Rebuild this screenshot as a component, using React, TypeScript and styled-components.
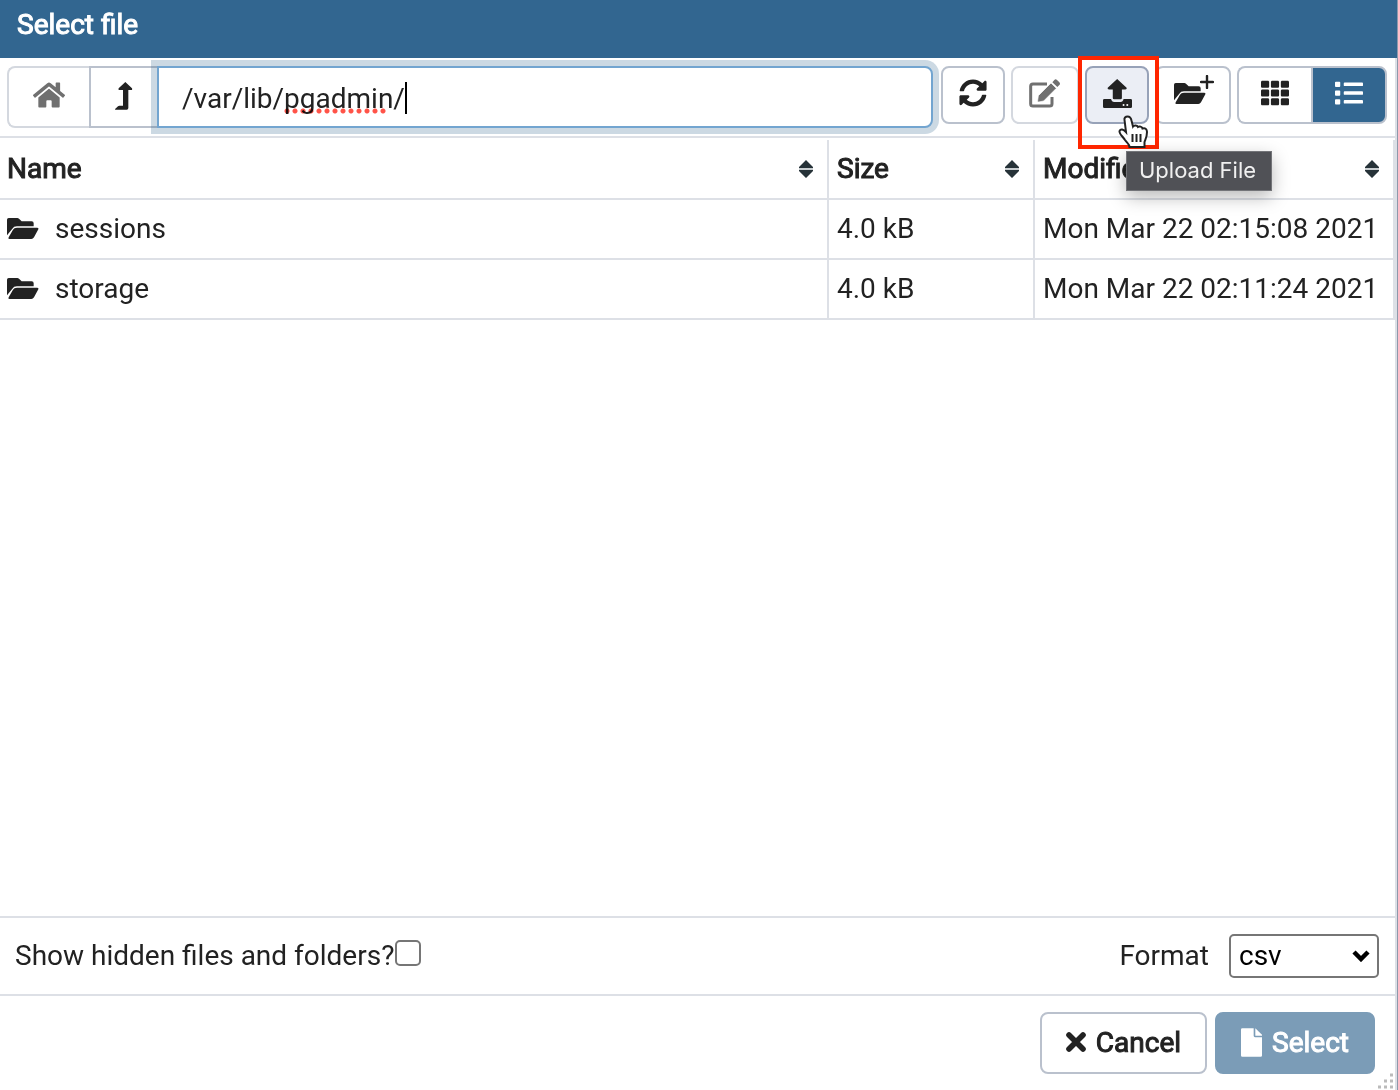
import React from "react";
import styled, { createGlobalStyle, css } from "styled-components";
import { FaHome, FaSyncAlt, FaTh, FaList } from "react-icons/fa";

const line = "#dde0e6";
const outline = "#bac1cd";
const brand = "#326690";
const ink = "#222222";

const GlobalStyle = createGlobalStyle`
  *, *::before, *::after { box-sizing: border-box; }
  body { margin: 0; background: #fff; }
  button, input, select { font: inherit; color: inherit; margin: 0; }
`;

const heavy = css`
  font-weight: 400;
  -webkit-text-stroke: 1px currentColor;
`;

const Frame = styled.div`
  border-right: 1px solid #8e99ab;
  background: #fff;
`;

const Dialog = styled.main`
  position: relative;
  display: flex;
  flex-direction: column;
  min-height: 100vh;
  border-right: 2px solid ${line};
  font: 400 28px/40px Roboto, "Liberation Sans", sans-serif;
  color: ${ink};
`;

const TitleBar = styled.h1`
  margin: 0 -2px 0 0;
  height: 58px;
  padding: 5px 17px;
  font-size: 28px;
  line-height: 40px;
  ${heavy}
  color: #fff;
  background: ${brand};
`;

const Toolbar = styled.div`
  display: flex;
  align-items: flex-start;
  gap: 6px;
  padding: 8px 8px 8px 7px;
  border-bottom: 2px solid ${line};
`;

const PathGroup = styled.div`
  display: flex;
  flex: 1;
  height: 62px;
  margin-right: 2px;
`;

const ToolButton = styled.button<{ $width?: number; $active?: boolean; $hot?: boolean }>`
  display: flex;
  align-items: center;
  justify-content: center;
  flex: none;
  width: ${(p) => p.$width ?? 64}px;
  height: 58px;
  padding: 0 0 4px;
  border: 2px solid ${outline};
  border-radius: 8px;
  background: ${(p) => (p.$active ? brand : p.$hot ? "#ebeef5" : "#fff")};
  color: ${(p) => (p.$active ? "#fff" : ink)};
  ${(p) => p.$hot && css`border-color: #97a2b8;`}
  &:disabled { border-color: #d4d8df; color: #707070; }
`;

const HomeButton = styled(ToolButton)`
  height: 62px;
  border-radius: 8px 0 0 8px;
  border-right: 0;
`;

const UpButton = styled(ToolButton)`
  height: 62px;
  padding-bottom: 2px;
  border-radius: 0;
  border-right: 0;
`;

const PathBox = styled.div`
  position: relative;
  display: flex;
  flex: 1;
  min-width: 0;
`;

const PathInput = styled.input`
  flex: 1;
  min-width: 0;
  height: 62px;
  padding: 2px 23px 0;
  border: 2px solid #73a5d0;
  border-radius: 0 8px 8px 0;
  outline: none;
  box-shadow: 0 0 0 6px rgba(50, 102, 144, 0.25);
  background: #fff;
`;

const SpellingDots = styled.span`
  position: absolute;
  left: 127px;
  top: 42px;
  width: 102px;
  height: 6px;
  background: radial-gradient(circle at 3px 3px, #ff5348 2px, rgba(255, 83, 72, 0) 3px) 0 0 / 8px 6px repeat-x;
  mix-blend-mode: multiply;
  pointer-events: none;
`;

const Caret = styled.span`
  position: absolute;
  left: 248px;
  top: 16px;
  width: 2px;
  height: 32px;
  background: #000;
  pointer-events: none;
`;

const ButtonPair = styled.div`
  display: flex;
  > :first-child { border-radius: 8px 0 0 8px; border-right: 0; }
  > :last-child { border-radius: 0 8px 8px 0; }
`;

const UploadSlot = styled.div`
  position: relative;
`;

const Highlight = styled.span`
  position: absolute;
  inset: -10px -10px -25px -7px;
  border: 4px solid #ff2600;
  pointer-events: none;
`;

const Tooltip = styled.span`
  position: absolute;
  z-index: 2;
  left: 41px;
  top: 85px;
  padding: 0 15px 2px 12px;
  border: 1px solid #737478;
  background: #505156;
  color: #f0f0f0;
  font: 400 22px/36px Inter, "Liberation Sans", sans-serif;
  white-space: nowrap;
  box-shadow: 0 6px 18px rgba(0, 0, 0, 0.28);
`;

const Pointer = styled.svg`
  position: absolute;
  z-index: 3;
  left: 33px;
  top: 49px;
`;

const FolderPlus = styled.span`
  position: relative;
  display: flex;
  padding-right: 6px;
  > :last-child { position: absolute; right: -2px; top: -8px; }
`;

const Listing = styled.section`
  flex: 1;
  padding-top: 2px;
`;

const Table = styled.table`
  width: 100%;
  border-collapse: separate;
  border-spacing: 0;
  border-right: 2px solid ${line};
  table-layout: fixed;
`;

const Cell = styled.td`
  height: 60px;
  padding: 0 8px;
  border-bottom: 2px solid ${line};
  white-space: nowrap;
  &:first-child { padding-left: 7px; }
  & + & { border-left: 2px solid ${line}; }
`;

const HeadCell = styled.th`
  height: 60px;
  padding: 0 13px 0 8px;
  text-align: left;
  ${heavy}
  border-bottom: 2px solid ${line};
  &:first-child { padding-left: 7px; }
  & + & { border-left: 2px solid ${line}; }
`;

const HeadLabel = styled.span`
  display: flex;
  align-items: center;
  justify-content: space-between;
`;

const FileName = styled.span`
  display: flex;
  align-items: center;
  gap: 16px;
  svg { margin-bottom: 2px; }
`;

const Options = styled.div`
  display: flex;
  align-items: center;
  justify-content: space-between;
  height: 80px;
  padding: 0 16px 0 15px;
  border-top: 2px solid ${line};
  border-bottom: 2px solid ${line};
`;

const Field = styled.label<{ $gap?: number }>`
  display: flex;
  align-items: center;
  gap: ${(p) => p.$gap ?? 1}px;
`;

const CheckBox = styled.input`
  appearance: none;
  width: 26px;
  height: 26px;
  margin-bottom: 6px;
  border: 2px solid #767676;
  border-radius: 5px;
  background: #fff;
`;

const SelectWrap = styled.span`
  position: relative;
  display: flex;
`;

const FormatSelect = styled.select`
  appearance: none;
  width: 150px;
  height: 44px;
  padding: 0 8px;
  border: 2px solid #767676;
  border-radius: 5px;
  color: #000;
  background: #fff;
`;

const Chevron = styled.svg`
  position: absolute;
  right: 9px;
  top: 16px;
  pointer-events: none;
`;

const Actions = styled.footer`
  display: flex;
  justify-content: flex-end;
  gap: 8px;
  padding: 16px 20px;
`;

const ActionButton = styled.button<{ $primary?: boolean }>`
  display: flex;
  align-items: center;
  gap: 10px;
  height: 62px;
  padding: 0 24px;
  border: 2px solid ${(p) => (p.$primary ? "#7b9cb7" : outline)};
  border-radius: 8px;
  ${heavy}
  color: ${(p) => (p.$primary ? "#fff" : ink)};
  background: ${(p) => (p.$primary ? "#7b9cb7" : "#fff")};
  svg { margin-bottom: 2px; }
`;

const Grip = styled.svg`
  position: absolute;
  right: 0;
  bottom: 0;
`;

const SortIcon = () => (
  <svg width="16" height="20" viewBox="0 0 16 20" aria-hidden="true">
    <path d="M8 1 15 8V9H1V8Z M8 19 1 12V11H15V12Z" fill="#263238" />
    <path d="M1 10H15" stroke="#c8cdd0" strokeWidth="2" />
  </svg>
);

const FolderIcon = () => (
  <svg width="32" height="21" viewBox="0 0 96 63" fill="currentColor" aria-hidden="true">
    <path d="M0 52V5q0-5 5-5H31q3 0 5 2l8 8H74q6 0 6 6v9H30q-10 0-14 7Z" />
    <path d="M30 29H91q5 0 3 5L81 58q-3 5-8 5H7q-5 0-2-5L18 35q3-6 12-6Z" />
  </svg>
);

const PlusIcon = () => (
  <svg width="14" height="14" viewBox="0 0 14 14" aria-hidden="true">
    <path d="M7 1V13M1 7H13" stroke="currentColor" strokeWidth="2.4" strokeLinecap="round" />
  </svg>
);

const UpIcon = () => (
  <svg width="18" height="28" viewBox="0 0 54 84" fill="currentColor" aria-hidden="true">
    <path d="M31 0 51 19q2 5-3 5H40V78q0 5-5 5H1q-2-1 0-3L9 73q2-2 4-2H24V24H14q-5 0-3-5Z" />
  </svg>
);

const EditIcon = () => (
  <svg width="32" height="29" viewBox="0 0 96 87" aria-hidden="true">
    <path d="M54 15H12q-7 0-7 7V74q0 7 7 7H62q7 0 7-7V54" fill="none" stroke="currentColor" strokeWidth="9" />
    <path d="M28 50 66 12 82 28 44 66 29 69q-4 0-3-4Z" fill="currentColor" stroke="#fff" strokeWidth="2" />
    <path d="M70 10l6-7q4-4 8 0l7 7q4 4 0 8l-6 6Z" fill="currentColor" />
  </svg>
);

const UploadIcon = () => (
  <svg width="29" height="29" viewBox="0 0 86 86" fill="currentColor" aria-hidden="true">
    <path d="M42 0 70 26q2 5-4 5H56V56q0 4-4 4H33q-4 0-4-4V31H18q-6 0-4-5Z" />
    <path d="M4 59H24q2 9 9 9H52q7 0 9-9H82q4 0 4 4V82q0 4-4 4H4q-4 0-4-4V63q0-4 4-4Z" />
    <circle cx="61" cy="77" r="3" fill="#fff" />
    <circle cx="72" cy="77" r="3" fill="#fff" />
  </svg>
);

const CloseIcon = () => (
  <svg width="20" height="20" viewBox="0 0 20 20" aria-hidden="true">
    <path d="M3 3 17 17M17 3 3 17" stroke="currentColor" strokeWidth="5.600" strokeLinecap="round" />
  </svg>
);

const FileIcon = () => (
  <svg width="21" height="29" viewBox="0 0 63 86" fill="currentColor" aria-hidden="true">
    <path d="M4 0H38V23q0 4 4 4H63V82q0 4-4 4H4q-4 0-4-4V4q0-4 4-4Z" />
    <path d="M43 0 63 20V23H43Z" />
  </svg>
);

const columns = [
  { label: "Name", width: undefined },
  { label: "Size", width: 206 },
  { label: "Modified", width: 360 },
];

const files = [
  { name: "sessions", size: "4.0 kB", modified: "Mon Mar 22 02:15:08 2021" },
  { name: "storage", size: "4.0 kB", modified: "Mon Mar 22 02:11:24 2021" },
];

export default function App() {
  return (
    <Frame>
      <GlobalStyle />
      <Dialog>
        <TitleBar>Select file</TitleBar>
        <Toolbar>
          <PathGroup>
            <HomeButton $width={82} disabled aria-label="Home"><FaHome size={32} /></HomeButton>
            <UpButton $width={68} aria-label="Go up"><UpIcon /></UpButton>
            <PathBox>
              <PathInput aria-label="Path" defaultValue="/var/lib/pgadmin/" />
              <SpellingDots />
              <Caret />
            </PathBox>
          </PathGroup>
          <ToolButton aria-label="Refresh"><FaSyncAlt size={28} /></ToolButton>
          <ToolButton $width={68} disabled aria-label="Rename"><EditIcon /></ToolButton>
          <UploadSlot>
            <ToolButton $hot aria-label="Upload"><UploadIcon /></ToolButton>
            <Highlight />
            <Pointer width="30" height="34" viewBox="0 0 30 34" aria-hidden="true">
              <path
                d="M9.500 1.500c2.500 0 3.500 1.500 4 4l1.500 6c1-1.500 4-1.500 5 .5 1.500-1 4-.5 4.500 1.500 2.500-1 4.500.5 4.500 3.500 0 5-1.500 7-2.500 10v5H11.500c0-3-2.500-4-4.500-7-2-3.500-6-6-5.500-9 1-2.500 4-2 6.500 1L6.500 5c-.5-2 1-3.500 3-3.500Z"
                fill="#fff"
                stroke="#222"
                strokeWidth="2"
              />
              <path d="M14.500 19v8M18.500 19v8M22.500 19v8" stroke="#222" strokeWidth="2" />
            </Pointer>
            <Tooltip role="tooltip">Upload File</Tooltip>
          </UploadSlot>
          <ToolButton $width={76} aria-label="New folder">
            <FolderPlus><FolderIcon /><PlusIcon /></FolderPlus>
          </ToolButton>
          <ButtonPair>
            <ToolButton $width={74} aria-label="Grid view"><FaTh size={28} /></ToolButton>
            <ToolButton $width={76} $active aria-label="List view"><FaList size={28} /></ToolButton>
          </ButtonPair>
        </Toolbar>
        <Listing>
          <Table>
            <colgroup>
              {columns.map((c) => <col key={c.label} width={c.width} />)}
            </colgroup>
            <thead>
              <tr>
                {columns.map((c) => (
                  <HeadCell key={c.label}><HeadLabel>{c.label}<SortIcon /></HeadLabel></HeadCell>
                ))}
              </tr>
            </thead>
            <tbody>
              {files.map((f) => (
                <tr key={f.name}>
                  <Cell><FileName><FolderIcon />{f.name}</FileName></Cell>
                  <Cell>{f.size}</Cell>
                  <Cell>{f.modified}</Cell>
                </tr>
              ))}
            </tbody>
          </Table>
        </Listing>
        <Options>
          <Field>Show hidden files and folders?<CheckBox type="checkbox" /></Field>
          <Field $gap={20}>
            Format
            <SelectWrap>
              <FormatSelect defaultValue="csv"><option>csv</option></FormatSelect>
              <Chevron width="18" height="12" viewBox="0 0 18 12" aria-hidden="true">
                <path d="M2 2l7 7 7-7" fill="none" stroke="#000" strokeWidth="4.500" />
              </Chevron>
            </SelectWrap>
          </Field>
        </Options>
        <Actions>
          <ActionButton><CloseIcon />Cancel</ActionButton>
          <ActionButton $primary disabled><FileIcon />Select</ActionButton>
        </Actions>
        <Grip width="18" height="18" viewBox="0 0 18 18" aria-hidden="true">
          <path d="M13 3h3M7 9h3M13 9h3M1 15h3M7 15h3M13 15h3" stroke="#bbb" strokeWidth="3" />
        </Grip>
      </Dialog>
    </Frame>
  );
}
